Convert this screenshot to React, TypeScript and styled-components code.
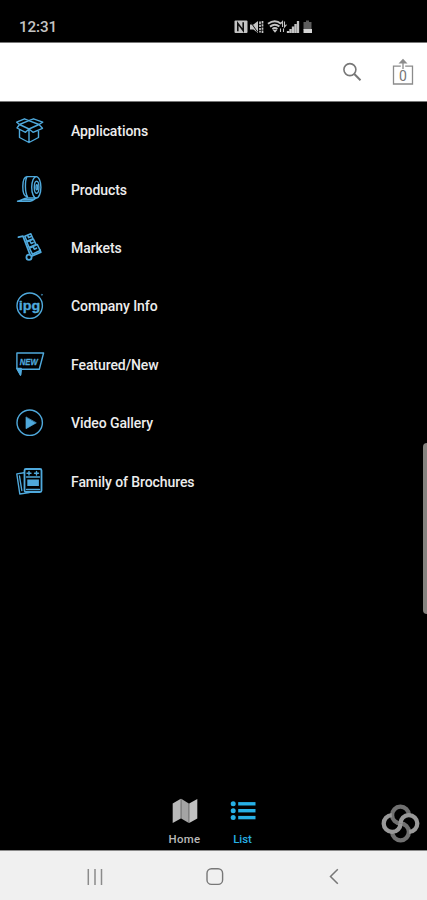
import React from "react";
import styled, { createGlobalStyle } from "styled-components";

const BLUE = "#4fa9dc";

const GlobalStyle = createGlobalStyle`
  * { box-sizing: border-box; }
  body { margin: 0; background: #000; }
`;

const Screen = styled.div`
  position: relative;
  display: flex;
  flex-direction: column;
  width: 427px;
  height: 900px;
  overflow: hidden;
  background: #000;
  font-family: Roboto, "Liberation Sans", sans-serif;
`;

const StatusBar = styled.div`
  display: flex;
  flex: none;
  align-items: center;
  height: 42px;
  padding: 12px 112px 0 19px;
  justify-content: space-between;
  color: #c4c4c4;
`;

const Clock = styled.span`
  font-size: 15.2px;
  line-height: 18px;
  font-weight: 500;
  letter-spacing: -0.1px;
`;

const Header = styled.header`
  display: flex;
  flex: none;
  align-items: center;
  justify-content: flex-end;
  gap: 30px;
  height: 60px;
  padding-right: 13px;
  background: #fff;
  border-top: 1px solid #777;
  border-bottom: 1px solid #777;
`;

const Menu = styled.ul`
  flex: 1;
  margin: 0;
  padding: 0;
  list-style: none;
`;

const MenuRow = styled.li`
  display: flex;
  align-items: center;
  gap: 26px;
  height: 58.4px;
  padding-left: 15px;
  color: #ededed;
  font-size: 14px;
  font-weight: 500;
  letter-spacing: -0.08px;
  svg { flex: none; }
`;

const TabBar = styled.nav`
  display: flex;
  flex: none;
  justify-content: center;
  height: 60px;
`;

const Tab = styled.div<{ $active?: boolean }>`
  display: flex;
  flex-direction: column;
  align-items: center;
  width: 58px;
  padding-top: 8px;
  color: ${(p) => (p.$active ? "#27b0e6" : "#b9b9b9")};
  font-size: 11.4px;
  font-weight: 500;
  letter-spacing: ${(p) => (p.$active ? "0" : "0.3px")};
  line-height: 14px;
  svg { margin-bottom: 8px; }
`;

const NavBar = styled.div`
  display: flex;
  flex: none;
  align-items: center;
  justify-content: space-between;
  height: 50px;
  padding: 3px 83px 0 85px;
  background: #f0f0f0;
  border-top: 1px solid #8a8a8a;
`;

const EdgeHandle = styled.div`
  position: absolute;
  right: -4px;
  top: 443px;
  width: 8px;
  height: 171px;
  border-radius: 5px;
  background: #85837f;
`;

const FloatingLogo = styled.div`
  position: absolute;
  left: 381px;
  top: 804px;
  width: 39px;
  height: 39px;
`;

function StatusIcons() {
  return (
    <svg width="81" height="16" viewBox="0 0 81 16" fill="none" stroke="#c4c4c4">
      <rect x="0.5" y="1.5" width="13" height="12.5" rx="1" fill="#c4c4c4" stroke="none" />
      <path d="M3.800 12.300V4.300L9.200 11.500V3.300" stroke="#111" strokeWidth="1.600" />
      <path d="M16 5.500h3.500l4.500-3.500v12l-4.500-3.500h-3.500z" fill="#c4c4c4" stroke="none" />
      <path d="M16.500 3l7 10" stroke="#111" />
      <path d="M26 2.500v11M28.500 2v12" strokeWidth="1.700" strokeDasharray="2.400 .8" />
      <path d="M34 4.800q7-5 13 0M36 7.600q5-3.600 9.400 0M38.400 10q2.500-1.800 5 0" strokeWidth="2" />
      <path d="M38.500 10.800h5L41 13.800z" fill="#c4c4c4" stroke="none" />
      <path d="M48.500 8V2.500l-2 2.400M50.500 2.500V8l2-2.400M46.500 9.500v3.500M49.500 9.500v3.500" strokeWidth="1.100" />
      <path d="M54 12V14M56.500 10V14M59 7.500V14M61.500 5V14M64 2V14" strokeWidth="2.300" />
      <path d="M72 1.500h3V3h2.500v8h-8V3h2.500z" fill="#5d5d5d" stroke="none" />
      <path d="M69.500 10h8.500v4h-8.500z" fill="#d5d5d5" stroke="none" />
    </svg>
  );
}

function SearchIcon() {
  return (
    <svg width="20" height="20" viewBox="0 0 20 20" fill="none" stroke="#777">
      <circle cx="7.900" cy="7.600" r="6" strokeWidth="1.600" />
      <path d="M12.300 12l6.200 6.200" strokeWidth="2" />
    </svg>
  );
}

const BadgeCount = styled.text`
  fill: #777;
  stroke: none;
  font-family: Roboto, sans-serif;
  font-size: 14px;
`;

function ShareIcon() {
  return (
    <svg width="22" height="28" viewBox="0 0 22 28" fill="none" stroke="#8b8b8b">
      <path d="M8.800 8.200H1.500V26h19V8.200h-7.300" strokeWidth="1.300" />
      <path d="M11 11V3" strokeWidth="1.300" />
      <path d="M6.500 5.500L11 .8l4.500 4.700z" fill="#8b8b8b" stroke="none" />
      <BadgeCount x="11" y="22.500" textAnchor="middle">0</BadgeCount>
    </svg>
  );
}

const LineIcon = styled.svg.attrs({ width: 30, height: 30, viewBox: "0 0 30 30" })`
  fill: none;
  stroke: ${BLUE};
  stroke-width: 1.4;
  stroke-linejoin: round;
  stroke-linecap: round;
`;

const Glyph = styled.text`
  fill: ${BLUE};
  stroke: ${BLUE};
  stroke-width: 0.3;
  font-family: "Liberation Sans", sans-serif;
  font-weight: 700;
  letter-spacing: 0;
`;

const BoxIcon = () => (
  <LineIcon>
    <path d="M14 13L4.500 8.500 13.800 4.600 24 8.500zM4.500 8.500L1.700 6.200 9.500 2.800l4.300 1.800 4.700-1.800 9.200 3.400L24 8.500M4.500 8.500L2 12l8.500 4.300L14 13l4 3.300 9.500-4L24 8.500M4.500 13.500v8L14 26.500l9.500-5v-7.300M14 13v13.500" />
  </LineIcon>
);

const TapeIcon = () => (
  <LineIcon>
    <ellipse cx="21.300" cy="12.300" rx="4.600" ry="10.700" />
    <ellipse cx="21.600" cy="12.300" rx="2.300" ry="6" />
    <ellipse cx="21.800" cy="12.300" rx=".8" ry="2.500" />
    <path d="M21 1.600H12C6.500 2 6.500 20.500 11.500 21.500M12 1.600c-2.200 4-2.200 15.500.5 20M21 23H12.500c-4.500 0-6 2.800-10 3.200h12.700c3 0 4-2 6-3.200M8.500 24.600h10" />
  </LineIcon>
);

const TrolleyIcon = () => (
  <LineIcon>
    <path d="M3.500 4.200L8 3.200l7 18.300M17 23l8.800-3.800-1-2.600" strokeWidth="1.800" />
    <circle cx="14" cy="24.200" r="2.600" strokeWidth="1.800" />
    <path d="M9.800 3.200L15.800.8l2.200 5-6.100 2.500zM11.800 9l6.600-3 2.600 5.600-6.900 2.900zM14.300 15.200l8-3.700 2.900 6-7.800 3.700zM12.600 2l1 2.600 2-.9M14.800 7.700l1.400 2.800 2-1M18 13.600l1.300 2.600 2.200-1" strokeWidth="1.600" />
  </LineIcon>
);

const IpgIcon = () => (
  <LineIcon>
    <circle cx="14.700" cy="14.700" r="12.700" />
    <Glyph x="14.500" y="18.500" textAnchor="middle" fontSize="13" textLength="21.500" lengthAdjust="spacingAndGlyphs">ipg</Glyph>
    <circle cx="26.800" cy="3.800" r=".5" strokeWidth=".6" />
  </LineIcon>
);

const NewIcon = () => (
  <LineIcon>
    <path d="M1.900 3H28.600L24.300 19.200H6.200L5.500 25 1.900 18.500z" />
    <path d="M1.900 18.500h4.300L5.500 25z" fill={BLUE} />
    <Glyph x="13.800" y="14.600" textAnchor="middle" fontSize="9.500" fontStyle="italic" textLength="18" lengthAdjust="spacingAndGlyphs">NEW</Glyph>
  </LineIcon>
);

const PlayIcon = () => (
  <LineIcon>
    <circle cx="14.700" cy="14.700" r="12.700" />
    <path d="M11 9.300v11.400L21 15z" fill={BLUE} strokeWidth=".7" />
  </LineIcon>
);

const BrochureIcon = () => (
  <LineIcon>
    <path d="M9 5.700L1.800 6.900 4.800 27l9.500-1.400M4.500 9l2.300 14.500" />
    <rect x="9.500" y="2" width="17" height="23" rx="1.500" strokeWidth="1.800" />
    <path d="M11.500 10h13M11.500 22.500h13M12 6.200h4M14 4.500v3.500M19.500 6.200h4M21.500 4.500v3.500" />
    <path d="M12.300 12.500h11.600v6.500h-11.600z" fill={BLUE} stroke="none" />
  </LineIcon>
);

const MapIcon = () => (
  <svg width="26" height="26" viewBox="0 0 26 26">
    <path d="M.7 5.500L8.800.8v19.800L.7 25z" fill="#b9b9b9" />
    <path d="M9.200.8L16.800 5.500V25l-7.600-4.400z" fill="#a4a4a4" />
    <path d="M17.200 5.500L25.300 1v19.400L17.200 25z" fill="#c1c1c1" />
  </svg>
);

const ListIcon = () => (
  <svg width="26" height="26" viewBox="0 0 26 26" fill="#27b0e6">
    {[5.800, 12.700, 19.600].map((y) => (
      <React.Fragment key={y}>
        <circle cx="3.200" cy={y} r="2.500" />
        <rect x="8.200" y={y - 1.700} width="17.300" height="3.400" />
      </React.Fragment>
    ))}
  </svg>
);

const KnotLogo = () => (
  <svg width="39" height="39" viewBox="0 0 39 39" fill="none" strokeWidth="4.300">
    <path d="M27.900 10.800A8.400 8.400 0 1 0 19.500 19.500" stroke="#707070" />
    <path d="M11.100 28.200A8.400 8.400 0 1 0 19.500 19.500" stroke="#707070" />
    <path d="M10.800 11.100A8.400 8.400 0 1 0 19.500 19.500" stroke="#999" />
    <path d="M28.200 27.900A8.400 8.400 0 1 0 19.500 19.500" stroke="#999" />
  </svg>
);

const RecentsIcon = () => (
  <svg width="20" height="20" viewBox="0 0 20 20" stroke="#8b8b8b" strokeWidth="1.500">
    <path d="M3.300 2v16M10 2v16M16.500 2v16" />
  </svg>
);

const HomeKeyIcon = () => (
  <svg width="20" height="20" viewBox="0 0 20 20" fill="none" stroke="#777" strokeWidth="1.400">
    <rect x="2" y="1.800" width="15.600" height="15.600" rx="4.500" />
  </svg>
);

const BackIcon = () => (
  <svg width="20" height="20" viewBox="0 0 20 20" fill="none" stroke="#777" strokeWidth="1.500">
    <path d="M13.800 2.300L6.500 9.500l7.300 7.200" />
  </svg>
);

const items = [
  { label: "Applications", Icon: BoxIcon },
  { label: "Products", Icon: TapeIcon },
  { label: "Markets", Icon: TrolleyIcon },
  { label: "Company Info", Icon: IpgIcon },
  { label: "Featured/New", Icon: NewIcon },
  { label: "Video Gallery", Icon: PlayIcon },
  { label: "Family of Brochures", Icon: BrochureIcon },
];

export default function App() {
  return (
    <Screen>
      <GlobalStyle />
      <StatusBar>
        <Clock>12:31</Clock>
        <StatusIcons />
      </StatusBar>
      <Header>
        <SearchIcon />
        <ShareIcon />
      </Header>
      <Menu>
        {items.map(({ label, Icon }) => (
          <MenuRow key={label}>
            <Icon />
            {label}
          </MenuRow>
        ))}
      </Menu>
      <TabBar>
        <Tab>
          <MapIcon />
          Home
        </Tab>
        <Tab $active>
          <ListIcon />
          List
        </Tab>
      </TabBar>
      <NavBar>
        <RecentsIcon />
        <HomeKeyIcon />
        <BackIcon />
      </NavBar>
      <EdgeHandle />
      <FloatingLogo>
        <KnotLogo />
      </FloatingLogo>
    </Screen>
  );
}
